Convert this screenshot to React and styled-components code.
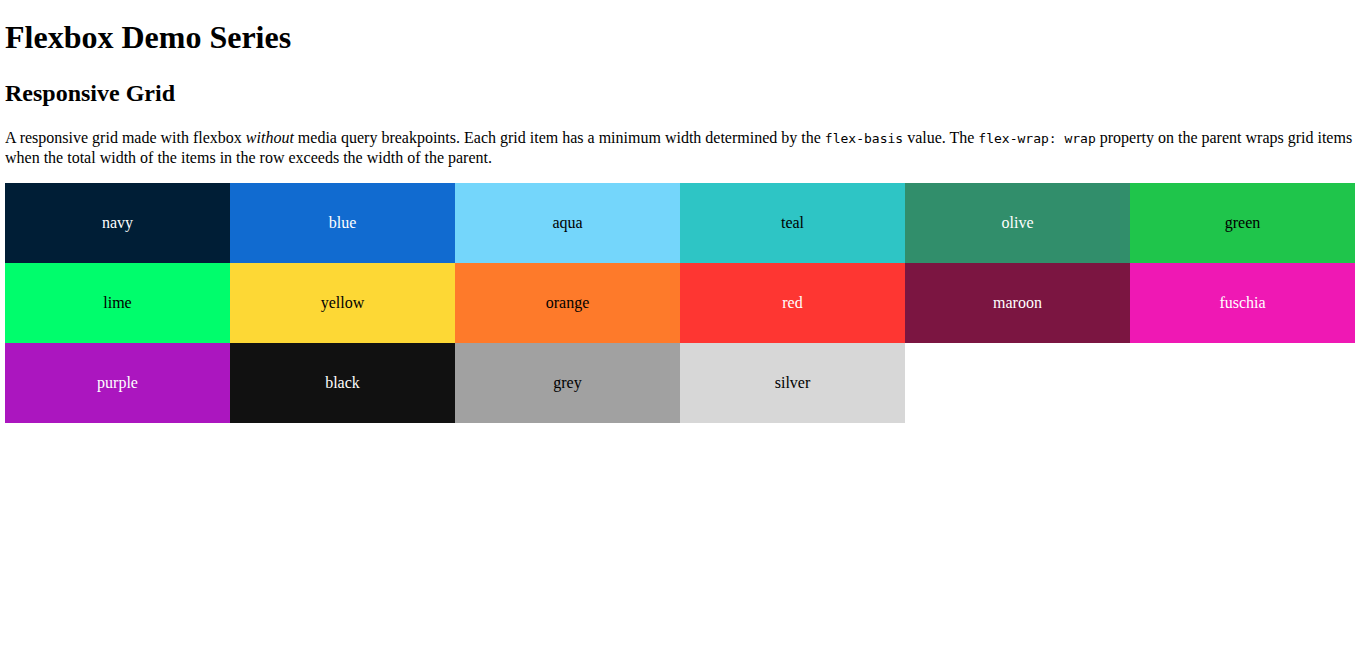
import React from "react";
import styled, { createGlobalStyle } from "styled-components";

const GlobalStyle = createGlobalStyle`
  html, body { background: #fff; }
  body {
    margin: 5px;
    font-family: "Liberation Serif", "Times New Roman", serif;
    font-size: 16px;
    color: #000;
  }
`;

const Title = styled.h1`
  font-size: 32px;
  font-weight: bold;
  margin: 13.5px 0 0;
`;

const Subtitle = styled.h2`
  font-size: 24px;
  font-weight: bold;
  margin: 24px 0 0;
`;

const Intro = styled.p`
  margin: 21px 0 16px;
  line-height: 19px;
`;

const Code = styled.code`
  font-family: "DejaVu Sans Mono", "Liberation Mono", monospace;
  font-size: 13px;
`;

const Grid = styled.div`
  display: flex;
  flex-wrap: wrap;
`;

const Cell = styled.div`
  flex: 0 0 225px;
  height: 80px;
  display: flex;
  align-items: center;
  justify-content: center;
  background: ${(p) => p.$bg};
  color: ${(p) => (p.$light ? "#fff" : "#000")};
`;

const items = [
  ["navy", "#001e36", true],
  ["blue", "#116bd0", true],
  ["aqua", "#74d6fb", false],
  ["teal", "#2ec5c5", false],
  ["olive", "#318e6b", true],
  ["green", "#1fc54b", false],
  ["lime", "#00fd6c", false],
  ["yellow", "#fdd835", false],
  ["orange", "#fe7a2a", false],
  ["red", "#fe3632", true],
  ["maroon", "#7b1541", true],
  ["fuschia", "#ef18b4", true],
  ["purple", "#ab16bf", true],
  ["black", "#111111", true],
  ["grey", "#a1a1a1", false],
  ["silver", "#d7d7d7", false],
];

export default function App() {
  return (
    <>
      <GlobalStyle />
      <Title>Flexbox Demo Series</Title>
      <Subtitle>Responsive Grid</Subtitle>
      <Intro>
        A responsive grid made with flexbox <em>without</em> media query breakpoints. Each grid item has a minimum width
        determined by the <Code>flex-basis</Code> value. The <Code>flex-wrap: wrap</Code> property on the parent wraps grid
        items when the total width of the items in the row exceeds the width of the parent.
      </Intro>
      <Grid>
        {items.map(([name, bg, light]) => (
          <Cell key={name} $bg={bg} $light={light}>
            {name}
          </Cell>
        ))}
      </Grid>
    </>
  );
}
